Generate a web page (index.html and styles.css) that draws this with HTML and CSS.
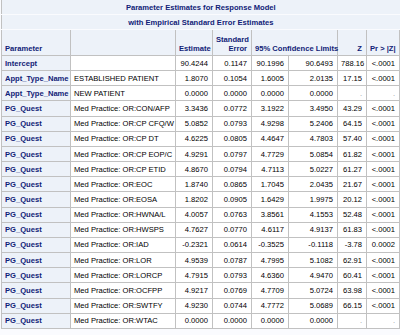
FILE: index.html
```html
<!DOCTYPE html>
<html lang="en">
<head>
    <meta charset="UTF-8">
    <title>Parameter Estimates for Response Model</title>
    <link rel="stylesheet" href="styles.css">
</head>
<body>
    <table class="estimates">
        <colgroup>
            <col class="c-param">
            <col class="c-level">
            <col class="c-est">
            <col class="c-se">
            <col class="c-lcl">
            <col class="c-ucl">
            <col class="c-z">
            <col class="c-p">
        </colgroup>
        <thead>
            <tr class="title-row">
                <th colspan="8">Parameter Estimates for Response Model</th>
            </tr>
            <tr class="title-row">
                <th colspan="8">with Empirical Standard Error Estimates</th>
            </tr>
            <tr class="head-row">
                <th class="left">Parameter</th>
                <th></th>
                <th>Estimate</th>
                <th>Standard<br>Error</th>
                <th colspan="2" class="center">95% Confidence Limits</th>
                <th>Z</th>
                <th>Pr &gt; |Z|</th>
            </tr>
        </thead>
        <tbody>
            <tr><th>Intercept</th><td class="left"></td><td>90.4244</td><td>0.1147</td><td>90.1996</td><td>90.6493</td><td>788.16</td><td>&lt;.0001</td></tr>
            <tr><th>Appt_Type_Name</th><td class="left">ESTABLISHED PATIENT</td><td>1.8070</td><td>0.1054</td><td>1.6005</td><td>2.0135</td><td>17.15</td><td>&lt;.0001</td></tr>
            <tr><th>Appt_Type_Name</th><td class="left">NEW PATIENT</td><td>0.0000</td><td>0.0000</td><td>0.0000</td><td>0.0000</td><td class="dot">.</td><td class="dot">.</td></tr>
            <tr><th>PG_Quest</th><td class="left">Med Practice: OR:CON/AFP</td><td>3.3436</td><td>0.0772</td><td>3.1922</td><td>3.4950</td><td>43.29</td><td>&lt;.0001</td></tr>
            <tr><th>PG_Quest</th><td class="left">Med Practice: OR:CP CFQ/W</td><td>5.0852</td><td>0.0793</td><td>4.9298</td><td>5.2406</td><td>64.15</td><td>&lt;.0001</td></tr>
            <tr><th>PG_Quest</th><td class="left">Med Practice: OR:CP DT</td><td>4.6225</td><td>0.0805</td><td>4.4647</td><td>4.7803</td><td>57.40</td><td>&lt;.0001</td></tr>
            <tr><th>PG_Quest</th><td class="left">Med Practice: OR:CP EOP/C</td><td>4.9291</td><td>0.0797</td><td>4.7729</td><td>5.0854</td><td>61.82</td><td>&lt;.0001</td></tr>
            <tr><th>PG_Quest</th><td class="left">Med Practice: OR:CP ETID</td><td>4.8670</td><td>0.0794</td><td>4.7113</td><td>5.0227</td><td>61.27</td><td>&lt;.0001</td></tr>
            <tr><th>PG_Quest</th><td class="left">Med Practice: OR:EOC</td><td>1.8740</td><td>0.0865</td><td>1.7045</td><td>2.0435</td><td>21.67</td><td>&lt;.0001</td></tr>
            <tr><th>PG_Quest</th><td class="left">Med Practice: OR:EOSA</td><td>1.8202</td><td>0.0905</td><td>1.6429</td><td>1.9975</td><td>20.12</td><td>&lt;.0001</td></tr>
            <tr><th>PG_Quest</th><td class="left">Med Practice: OR:HWNA/L</td><td>4.0057</td><td>0.0763</td><td>3.8561</td><td>4.1553</td><td>52.48</td><td>&lt;.0001</td></tr>
            <tr><th>PG_Quest</th><td class="left">Med Practice: OR:HWSPS</td><td>4.7627</td><td>0.0770</td><td>4.6117</td><td>4.9137</td><td>61.83</td><td>&lt;.0001</td></tr>
            <tr><th>PG_Quest</th><td class="left">Med Practice: OR:IAD</td><td>-0.2321</td><td>0.0614</td><td>-0.3525</td><td>-0.1118</td><td>-3.78</td><td>0.0002</td></tr>
            <tr><th>PG_Quest</th><td class="left">Med Practice: OR:LOR</td><td>4.9539</td><td>0.0787</td><td>4.7995</td><td>5.1082</td><td>62.91</td><td>&lt;.0001</td></tr>
            <tr><th>PG_Quest</th><td class="left">Med Practice: OR:LORCP</td><td>4.7915</td><td>0.0793</td><td>4.6360</td><td>4.9470</td><td>60.41</td><td>&lt;.0001</td></tr>
            <tr><th>PG_Quest</th><td class="left">Med Practice: OR:OCFPP</td><td>4.9217</td><td>0.0769</td><td>4.7709</td><td>5.0724</td><td>63.98</td><td>&lt;.0001</td></tr>
            <tr><th>PG_Quest</th><td class="left">Med Practice: OR:SWTFY</td><td>4.9230</td><td>0.0744</td><td>4.7772</td><td>5.0689</td><td>66.15</td><td>&lt;.0001</td></tr>
            <tr><th>PG_Quest</th><td class="left">Med Practice: OR:WTAC</td><td>0.0000</td><td>0.0000</td><td>0.0000</td><td>0.0000</td><td class="dot">.</td><td class="dot">.</td></tr>
        </tbody>
    </table>
</body>
</html>
```

FILE: styles.css
```css
body {
    margin: 0;
    padding: 0 1px;
    background-color: #fafbfe;
    font-family: "Liberation Sans", Arial, sans-serif;
    font-size: 7.6px;
}

.estimates {
    width: 398px;
    table-layout: fixed;
    border-collapse: collapse;
    background-color: #edf2f9;
    border-left: 1px solid #c1c1c1;
}

.c-param { width: 69px; }
.c-level { width: 105px; }
.c-est { width: 37px; }
.c-se { width: 39px; }
.c-lcl { width: 37px; }
.c-ucl { width: 49px; }
.c-z { width: 29px; }
.c-p { width: 33px; }

.title-row th {
    height: 14px;
    padding: 0;
    text-align: center;
    color: #112277;
    font-weight: bold;
    background-color: #edf2f9;
    border-bottom: 1px solid #fafbfe;
}

.head-row th {
    height: 23px;
    padding: 0 4px 2px 3px;
    vertical-align: bottom;
    text-align: right;
    color: #112277;
    font-weight: bold;
    line-height: 9px;
    white-space: nowrap;
    background-color: #edf2f9;
    border-top: 1px solid #c1c1c1;
    border-right: 1px solid #c1c1c1;
    border-bottom: 1px solid #c1c1c1;
}

.head-row th.left {
    text-align: left;
}

.head-row th.center {
    text-align: center;
}

tbody th {
    height: 14.17px;
    padding: 0 3px;
    text-align: left;
    color: #112277;
    font-weight: bold;
    background-color: #edf2f9;
    border-right: 1px solid #c1c1c1;
    border-bottom: 1px solid #c1c1c1;
    white-space: nowrap;
}

tbody td {
    padding: 0 4px 0 3px;
    text-align: right;
    color: #000000;
    background-color: #ffffff;
    border-right: 1px solid #c1c1c1;
    border-bottom: 1px solid #c1c1c1;
    white-space: nowrap;
}

tbody td.left {
    text-align: left;
}

tbody td.dot {
    color: #999999;
}
```
